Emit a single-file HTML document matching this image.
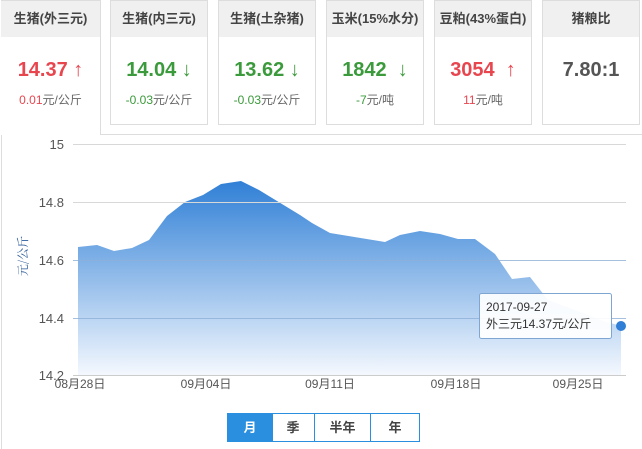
<!DOCTYPE html>
<html><head><meta charset="utf-8"><style>
*{margin:0;padding:0;box-sizing:border-box}
body{width:642px;height:449px;background:#fff;font-family:"Liberation Sans","Noto Sans CJK SC",sans-serif;position:relative;overflow:hidden}
.card{position:absolute;top:0;width:98px;height:125px;border:1px solid #ddd;background:#fff;text-align:center}
.card .h{height:36px;background:#f0f0f0;line-height:36px;font-size:13px;color:#444;font-weight:bold}
.card .v{font-size:20px;font-weight:bold;margin-top:21px;height:24px;line-height:24px}
.card .c{font-size:12px;color:#666;margin-top:9px}
.r{color:#e8464f}.g{color:#3b9a3b}
.btn{position:absolute;top:413px;height:29px;line-height:27px;text-align:center;font-size:13px;font-weight:bold;color:#444;border:1px solid #2a8fde}
</style></head><body>
<div style="position:absolute;left:1px;top:0;width:1px;height:449px;background:#ddd"></div>
<div style="position:absolute;left:100px;top:134px;width:542px;height:1px;background:#ddd"></div>
<div class="card" style="left:1px;width:100px;height:135px;border-bottom:none;border-left:none"><div class="h">生猪(外三元)</div><div class="v r">14.37 ↑</div><div class="c"><span class="r">0.01</span>元/公斤</div></div>
<div class="card" style="left:110px"><div class="h">生猪(内三元)</div><div class="v g">14.04 ↓</div><div class="c"><span class="g">-0.03</span>元/公斤</div></div>
<div class="card" style="left:218px"><div class="h">生猪(土杂猪)</div><div class="v g">13.62 ↓</div><div class="c"><span class="g">-0.03</span>元/公斤</div></div>
<div class="card" style="left:326px"><div class="h">玉米(15%水分)</div><div class="v g">1842 &nbsp;↓</div><div class="c"><span class="g">-7</span>元/吨</div></div>
<div class="card" style="left:434px"><div class="h">豆粕(43%蛋白)</div><div class="v r">3054 &nbsp;↑</div><div class="c"><span class="r">11</span>元/吨</div></div>
<div class="card" style="left:542px"><div class="h">猪粮比</div><div class="v" style="color:#555">7.80:1</div></div>
<svg style="position:absolute;left:0;top:0" width="642" height="449">
<defs><linearGradient id="gr" x1="0" y1="180" x2="0" y2="375" gradientUnits="userSpaceOnUse"><stop offset="0" stop-color="#2f7fd6"/><stop offset="1" stop-color="#f4f8fe"/></linearGradient></defs>
<path d="M78,247 L97,245 L114,251 L132,248 L149,240 L167,216 L185,202 L203,195 L221,184 L241,181 L259,190 L277,201 L300,215 L312,223 L330,233 L385,242 L400,235 L420,231 L440,234 L458,239 L475,239 L495,254 L512,279 L530,277 L548,300 L575,310 L600,320 L621,326 L621,375 L78,375 Z" fill="url(#gr)"/>
<g stroke="#d8d8d8" stroke-width="1"><line x1="73" y1="144.5" x2="626" y2="144.5"/><line x1="73" y1="202.5" x2="626" y2="202.5"/></g>
<g stroke="#8fb0d8" stroke-width="1" opacity=".8"><line x1="73" y1="260.5" x2="626" y2="260.5"/><line x1="73" y1="318.5" x2="626" y2="318.5"/></g>
<line x1="73" y1="375.5" x2="626" y2="375.5" stroke="#ccc"/>
<g font-size="13" fill="#555" text-anchor="end" font-family="Liberation Sans,sans-serif"><text x="64" y="149">15</text><text x="64" y="207">14.8</text><text x="64" y="265">14.6</text><text x="64" y="323">14.4</text><text x="64" y="380">14.2</text></g>
<g font-size="12" fill="#555" text-anchor="middle" font-family="Liberation Sans,Noto Sans CJK SC,sans-serif"><text x="80" y="388">08月28日</text><text x="206" y="388">09月04日</text><text x="330" y="388">09月11日</text><text x="456" y="388">09月18日</text><text x="578" y="388">09月25日</text></g>
<text transform="translate(27,256) rotate(-90)" text-anchor="middle" font-size="12" fill="#2a5a9a" font-family="Noto Serif CJK SC,serif">元/公斤</text>
<circle cx="621" cy="326" r="5" fill="#2f7fd6"/>
<rect x="479.5" y="293.5" width="132" height="45" rx="2" fill="#fff" fill-opacity=".92" stroke="#7fa6d2"/>
<text x="486" y="311" font-size="12" fill="#333" font-family="Liberation Sans,sans-serif">2017-09-27</text>
<text x="486" y="328" font-size="12" fill="#333" font-family="Liberation Sans,Noto Sans CJK SC,sans-serif">外三元14.37元/公斤</text>
</svg>
<div class="btn" style="left:227px;width:46px;background:#2a8fde;color:#fff">月</div>
<div class="btn" style="left:272px;width:43px;border-left:none">季</div>
<div class="btn" style="left:314px;width:57px">半年</div>
<div class="btn" style="left:370px;width:50px">年</div>
</body></html>
